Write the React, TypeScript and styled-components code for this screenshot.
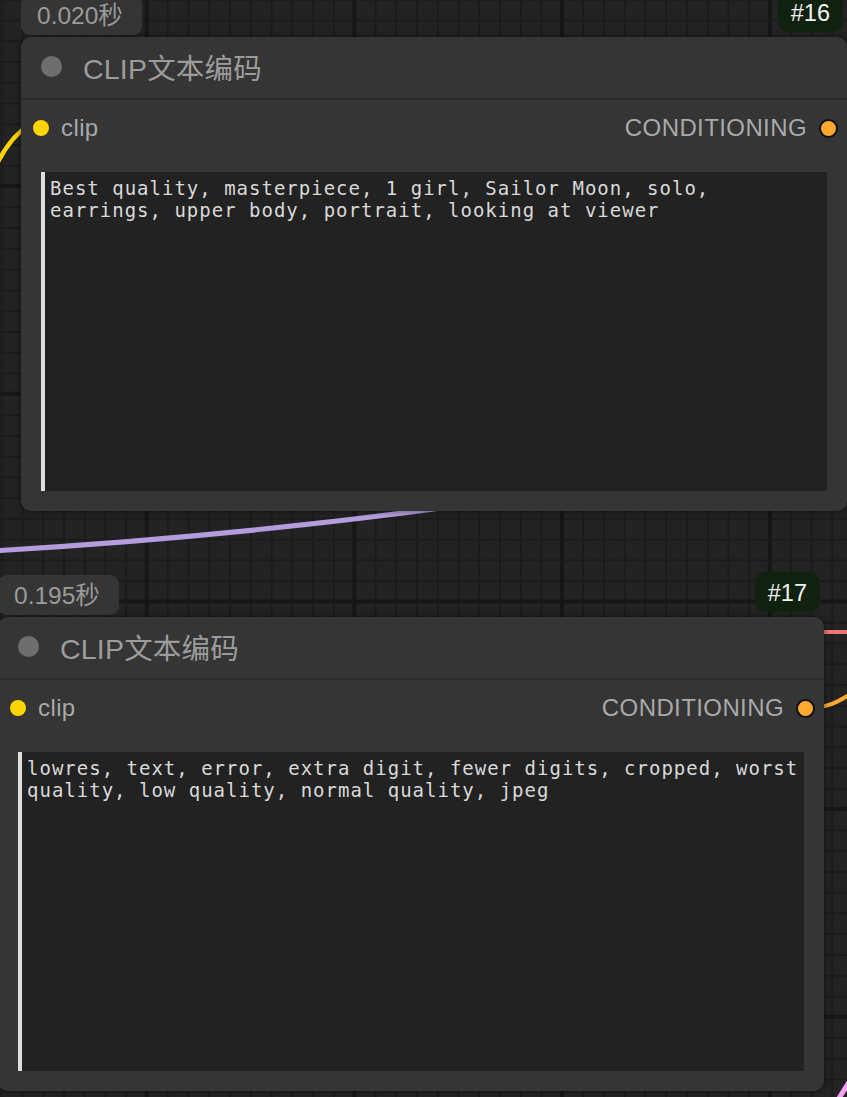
import React from 'react';
import styled, {createGlobalStyle} from 'styled-components';

const GlobalStyle = createGlobalStyle`
  html, body {
    margin: 0;
    padding: 0;
    background: #232323;
    overflow: hidden;
  }
`;

const Canvas = styled.div`
  position: relative;
  width: 847px;
  height: 1097px;
  overflow: hidden;
  background-color: #232323;
  background-image:
    linear-gradient(to right, #161616 4px, transparent 4px),
    linear-gradient(to bottom, #161616 4px, transparent 4px),
    linear-gradient(to right, #1b1b1b 2px, transparent 2px),
    linear-gradient(to bottom, #1b1b1b 2px, transparent 2px);
  background-size: 207.7px 100%, 100% 207.7px, 20.77px 100%, 100% 20.77px;
  background-position: 144.7px 0, 0 184px, 0.7px 0, 0 -1.25px;
  font-family: 'Liberation Sans', 'Noto Sans CJK SC', sans-serif;
`;

const Wires = styled.svg`
  position: absolute;
  left: 0;
  top: 0;
  width: 847px;
  height: 1097px;
  pointer-events: none;
`;

const NodeFrame = styled.div<{$x: number; $y: number}>`
  position: absolute;
  left: ${(p) => p.$x}px;
  top: ${(p) => p.$y}px;
  width: 826px;
  height: 474px;
  display: flex;
  flex-direction: column;
  background: #353535;
  border-radius: 10px;
  box-shadow: 0 0 6px rgba(0, 0, 0, 0.55);
`;

const TimingBadge = styled.div`
  position: absolute;
  left: 0;
  top: -42px;
  width: 121px;
  height: 40px;
  box-sizing: border-box;
  padding: 0 0 3px 16px;
  display: flex;
  align-items: center;
  background: #353535;
  border-radius: 9px;
  color: #9a9a9a;
  font-size: 24.5px;
`;

const IdBadge = styled.div`
  position: absolute;
  right: 4px;
  top: -45px;
  height: 40px;
  box-sizing: border-box;
  padding: 2px 13px 0;
  display: flex;
  align-items: center;
  background: #11210f;
  border-radius: 10px;
  color: #f2f2f2;
  font-size: 23.5px;
`;

const TitleBar = styled.div`
  height: 63px;
  flex: none;
  box-sizing: border-box;
  display: flex;
  align-items: center;
  gap: 21px;
  padding: 0 0 3px 20px;
  border-bottom: 2px solid #2b2b2b;
`;

const StatusDot = styled.span`
  width: 21px;
  height: 21px;
  border-radius: 50%;
  background: #6e6e6e;
`;

const Title = styled.span`
  color: #9c9c9c;
  font-size: 28.5px;
  letter-spacing: 0.2px;
`;

const SlotRow = styled.div`
  height: 54px;
  flex: none;
  box-sizing: border-box;
  display: flex;
  align-items: center;
  justify-content: space-between;
  padding: 2px 9px 0 12px;
`;

const Slot = styled.div`
  display: flex;
  align-items: center;
  gap: 12px;
  color: #a9a9a9;
  font-size: 24px;
  letter-spacing: 0.4px;
`;

const InputDot = styled.span`
  width: 16px;
  height: 16px;
  border-radius: 50%;
  background: #ffd500;
`;

const OutputDot = styled.span`
  width: 15px;
  height: 15px;
  border-radius: 50%;
  background: #ffa931;
  border: 2px solid #111;
`;

const Prompt = styled.textarea`
  flex: 1;
  min-height: 0;
  margin: 18px 20px 20px;
  box-sizing: border-box;
  border: none;
  border-left: 4px solid #dedede;
  border-radius: 0;
  background: #222222;
  color: #d9d9d9;
  font-family: 'DejaVu Sans Mono', monospace;
  font-size: 19px;
  letter-spacing: 1px;
  line-height: 22px;
  padding: 5px 5px;
  resize: none;
  outline: none;
  overflow: hidden;
`;

type NodeProps = {
  x: number;
  y: number;
  id: number;
  time: string;
  text: string;
};

const ClipTextNode: React.FC<NodeProps> = ({x, y, id, time, text}) => (
  <NodeFrame $x={x} $y={y}>
    <TimingBadge>{time}</TimingBadge>
    <IdBadge>#{id}</IdBadge>
    <TitleBar>
      <StatusDot />
      <Title>CLIP文本编码</Title>
    </TitleBar>
    <SlotRow>
      <Slot>
        <InputDot />
        clip
      </Slot>
      <Slot>
        CONDITIONING
        <OutputDot />
      </Slot>
    </SlotRow>
    <Prompt readOnly spellCheck={false} defaultValue={text} />
  </NodeFrame>
);

export default function App() {
  return (
    <Canvas>
      <GlobalStyle />
      <Wires viewBox="0 0 847 1097">
        <path d="M -8 175 Q 6 140 30 124" stroke="#ffd500" strokeWidth="4.5" fill="none" />
        <path d="M -10 551 Q 240 537 500 500" stroke="#b49ddf" strokeWidth="5" fill="none" />
        <path d="M 790 632 L 850 632" stroke="#f07474" strokeWidth="4" fill="none" />
        <path d="M 806 708 C 828 708 838 702 852 693" stroke="#ffa931" strokeWidth="4" fill="none" />
        <path d="M 836 1103 L 853 1076" stroke="#f4a3f4" strokeWidth="5" fill="none" />
      </Wires>
      <ClipTextNode
        x={21}
        y={37}
        id={16}
        time="0.020秒"
        text="Best quality, masterpiece, 1 girl, Sailor Moon, solo, earrings, upper body, portrait, looking at viewer"
      />
      <ClipTextNode
        x={-2}
        y={617}
        id={17}
        time="0.195秒"
        text="lowres, text, error, extra digit, fewer digits, cropped, worst quality, low quality, normal quality, jpeg"
      />
    </Canvas>
  );
}
